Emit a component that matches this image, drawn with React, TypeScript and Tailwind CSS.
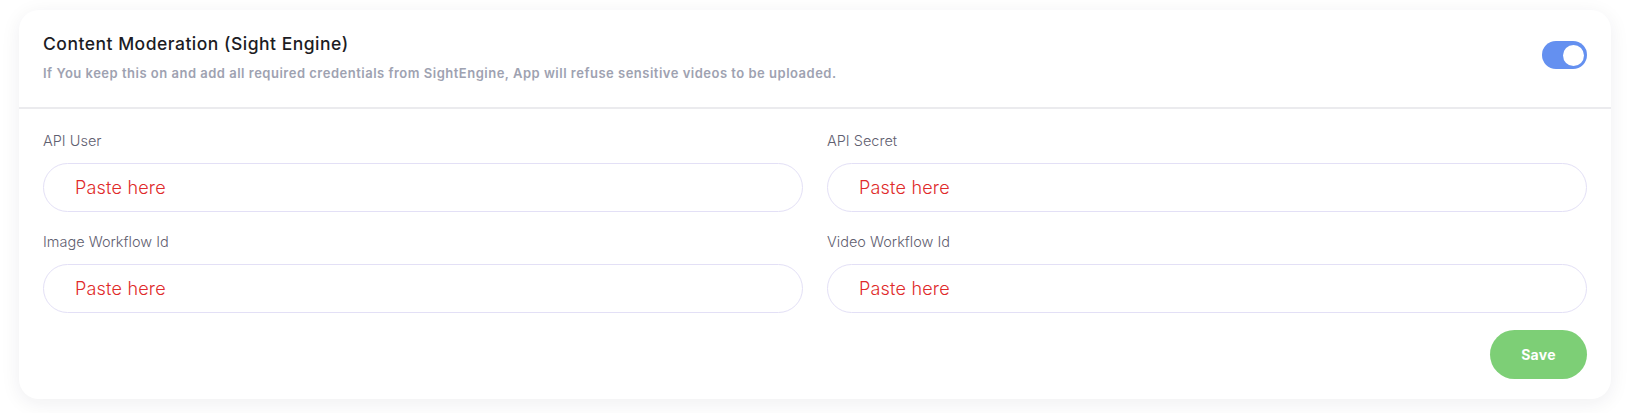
import { useState } from "react";

type Field = { label: string; name: string };

const fields: Field[] = [
  { label: "API User", name: "apiUser" },
  { label: "API Secret", name: "apiSecret" },
  { label: "Image Workflow Id", name: "imageWorkflowId" },
  { label: "Video Workflow Id", name: "videoWorkflowId" },
];

function Toggle({ on, onChange }: { on: boolean; onChange: (v: boolean) => void }) {
  return (
    <button
      type="button"
      role="switch"
      aria-checked={on}
      onClick={() => onChange(!on)}
      className={`flex h-[28px] w-[45px] shrink-0 items-center rounded-full px-[3px] transition-colors ${
        on ? "justify-end bg-[#6490f0]" : "justify-start bg-gray-300"
      }`}
    >
      <span className="h-[21px] w-[21px] rounded-full bg-white" />
    </button>
  );
}

export default function App() {
  const [enabled, setEnabled] = useState(true);

  return (
    <div className="min-h-screen bg-white px-[19px] pt-[10px] font-['Inter',sans-serif]">
      <section className="rounded-[20px] bg-white shadow-[0_4px_20px_rgba(30,30,60,0.07)]">
        <header className="flex items-start justify-between border-b-2 border-[#ebebee] px-6 pb-[25px] pt-[22px]">
          <div>
            <h2 className="text-[17.5px] font-medium leading-[24px] tracking-[0.5px] text-[#1c1c24]">
              Content Moderation (Sight Engine)
            </h2>
            <p className="mt-[8px] text-[13px] font-semibold leading-[18px] tracking-[0.5px] text-[#9ea2b1]">
              If You keep this on and add all required credentials from SightEngine, App will refuse
              sensitive videos to be uploaded.
            </p>
          </div>
          <div className="pt-[9px]">
            <Toggle on={enabled} onChange={setEnabled} />
          </div>
        </header>

        <form className="px-6 pb-5 pt-[20px]" onSubmit={(e) => e.preventDefault()}>
          <div className="grid grid-cols-2 gap-x-6 gap-y-[18px]">
            {fields.map((f) => (
              <label key={f.name} className="flex flex-col gap-[11px]">
                <span className="text-[14.5px] font-light leading-[23px] text-[#5f6070]">
                  {f.label}
                </span>
                <input
                  name={f.name}
                  placeholder="Paste here"
                  className="h-[49px] rounded-full border border-[#e3e0f6] bg-white px-[31px] text-[18px] font-light tracking-[0.2px] text-[#1c1c24] outline-none placeholder:text-[#e02a2a]"
                />
              </label>
            ))}
          </div>
          <div className="mt-[17px] flex justify-end">
            <button
              type="submit"
              className="h-[49px] w-[97px] rounded-full bg-[#7dcf76] text-[14px] font-bold tracking-[0.3px] text-white"
            >
              Save
            </button>
          </div>
        </form>
      </section>
    </div>
  );
}
